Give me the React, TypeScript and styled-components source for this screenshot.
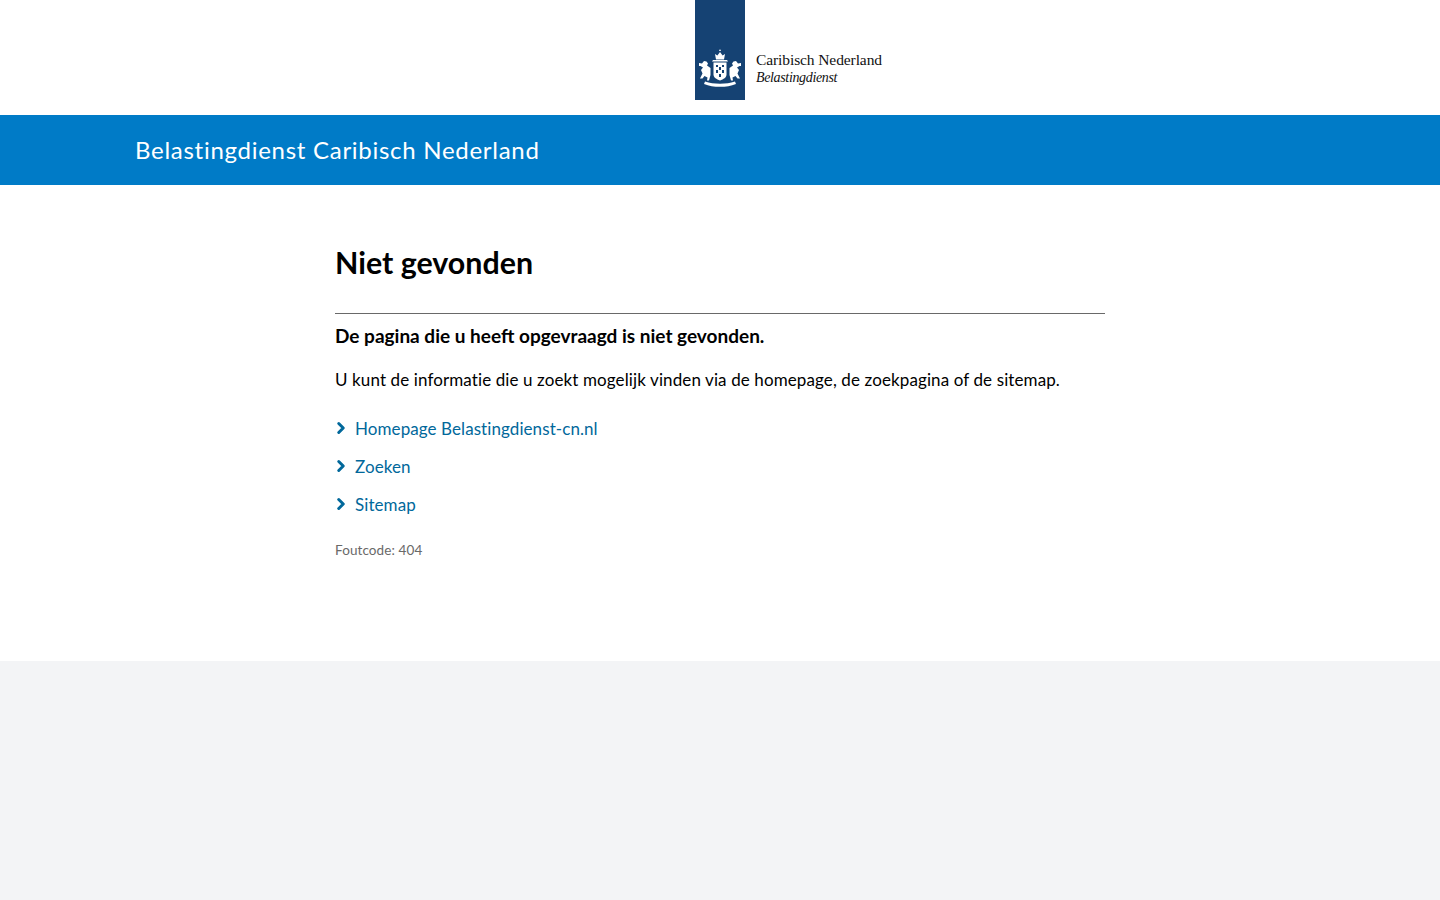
import React from "react";
import styled, { createGlobalStyle } from "styled-components";
import { ChevronRight } from "lucide-react";

const GlobalStyle = createGlobalStyle`
  html, body {
    margin: 0;
    padding: 0;
    background: #fff;
    font-family: "Lato", "Noto Sans", sans-serif;
    color: #000;
  }
`;

const Page = styled.div`
  min-height: 900px;
  display: flex;
  flex-direction: column;
  background: #f3f4f6;
`;

const LogoBar = styled.header`
  height: 115px;
  background: #fff;
  display: flex;
  justify-content: center;
`;

const LogoLink = styled.a`
  display: flex;
  height: 100px;
  width: 188px;
  margin-left: 138px;
`;

const Ribbon = styled.div`
  flex: none;
  width: 50px;
  height: 100px;
  background: #154273;
  display: flex;
  align-items: flex-end;
  justify-content: center;
  padding-bottom: 13px;
  box-sizing: border-box;
`;

const Wordmark = styled.div`
  padding: 51px 0 0 11px;
  font-family: "Liberation Serif", serif;
  color: #111;
  white-space: nowrap;
`;

const WordmarkName = styled.div`
  font-size: 15.5px;
  line-height: 18px;
  letter-spacing: -0.1px;
`;

const WordmarkOrg = styled.div`
  font-size: 14px;
  line-height: 18px;
  font-style: italic;
  letter-spacing: -0.35px;
`;

const Banner = styled.div`
  height: 70px;
  box-sizing: border-box;
  padding: 0 0 2px 135px;
  background: #007bc7;
  display: flex;
  align-items: center;
  color: #fff;
  font-size: 24px;
  font-weight: 400;
  letter-spacing: 0.72px;
`;

const Main = styled.main`
  height: 476px;
  background: #fff;
  display: flex;
  justify-content: center;
`;

const Content = styled.div`
  width: 770px;
`;

const Title = styled.h1`
  margin: 0;
  padding: 58px 0 31px;
  height: 39px;
  font-size: 30.4px;
  line-height: 39px;
  font-weight: 700;
  border-bottom: 1px solid #696969;
`;

const Lead = styled.p`
  margin: 9px 0 0;
  font-size: 19px;
  line-height: 26px;
  font-weight: 700;
`;

const Text = styled.p`
  margin: 18px 0 0;
  font-size: 17px;
  line-height: 26px;
  letter-spacing: 0.11px;
`;

const LinkList = styled.ul`
  list-style: none;
  margin: 22px 0 0;
  padding: 0;
  display: flex;
  flex-direction: column;
  gap: 12px;
`;

const LinkRow = styled.li`
  display: flex;
  align-items: center;
  height: 26px;
  color: #01689b;
  font-size: 17px;
  letter-spacing: 0.08px;
`;

const Arrow = styled(ChevronRight)`
  width: 18px;
  height: 18px;
  margin-left: -3px;
  padding-right: 5px;
  flex: none;
  color: #01689b;
`;

const ErrorCode = styled.p`
  margin: 20px 0 0;
  font-size: 13.5px;
  line-height: 26px;
  color: #696969;
  letter-spacing: 0.1px;
`;

const Footer = styled.footer`
  flex: 1;
  background: #f3f4f6;
`;

const Crest = () => (
  <svg width="44" height="38" viewBox="0 0 44 38" fill="#fff">
    {/* crown */}
    <path d="M22 0l1 2h-2zM17 5l2.400 1.600L22 3l2.600 3.600L27 5l-1 5.500h-8z" />
    <path d="M15 11h14l1 1.500H14z" />
    {/* shield */}
    <path d="M15.500 13.500h13v12c0 3-3 4.800-6.500 6-3.500-1.200-6.500-3-6.500-6z" />
    <path
      fill="#154273"
      d="M18 16h2v2h-2zM24 16h2v2h-2zM21 18h2v3h-2zM18 21h2v3h-2zM24 21h2v3h-2zM21 25h2v3h-2z"
    />
    {/* left lion */}
    <path d="M1 14l3 .5 2-2.500 2.500.5 1.500 2-1 2 3.500 2.500V26l-1.500 5.500H9l.5-3-3-1.500-2 2.500H2l2.500-5L3 21l2-2.500-2.500-1.500H1z" />
    {/* right lion */}
    <path d="M43 14l-3 .5-2-2.500-2.500.5-1.500 2 1 2-3.500 2.500V26l1.500 5.500H35l-.5-3 3-1.500 2 2.500H42l-2.500-5L41 21l-2-2.500 2.500-1.500H43z" />
    {/* motto ribbon */}
    <path d="M7 32.500c5 1.800 9 2.200 15 2.200s10-.4 15-2.200l1 2.500c-5 2-10 2.800-16 2.800S11 37 6 35z" />
  </svg>
);

export default function App() {
  return (
    <>
      <GlobalStyle />
      <Page>
        <LogoBar>
          <LogoLink>
            <Ribbon>
              <Crest />
            </Ribbon>
            <Wordmark>
              <WordmarkName>Caribisch Nederland</WordmarkName>
              <WordmarkOrg>Belastingdienst</WordmarkOrg>
            </Wordmark>
          </LogoLink>
        </LogoBar>
        <Banner>Belastingdienst Caribisch Nederland</Banner>
        <Main>
          <Content>
            <Title>Niet gevonden</Title>
            <Lead>De pagina die u heeft opgevraagd is niet gevonden.</Lead>
            <Text>
              U kunt de informatie die u zoekt mogelijk vinden via de homepage,
              de zoekpagina of de sitemap.
            </Text>
            <LinkList>
              <LinkRow>
                <Arrow strokeWidth={4} />
                Homepage Belastingdienst-cn.nl
              </LinkRow>
              <LinkRow>
                <Arrow strokeWidth={4} />
                Zoeken
              </LinkRow>
              <LinkRow>
                <Arrow strokeWidth={4} />
                Sitemap
              </LinkRow>
            </LinkList>
            <ErrorCode>Foutcode: 404</ErrorCode>
          </Content>
        </Main>
        <Footer />
      </Page>
    </>
  );
}
